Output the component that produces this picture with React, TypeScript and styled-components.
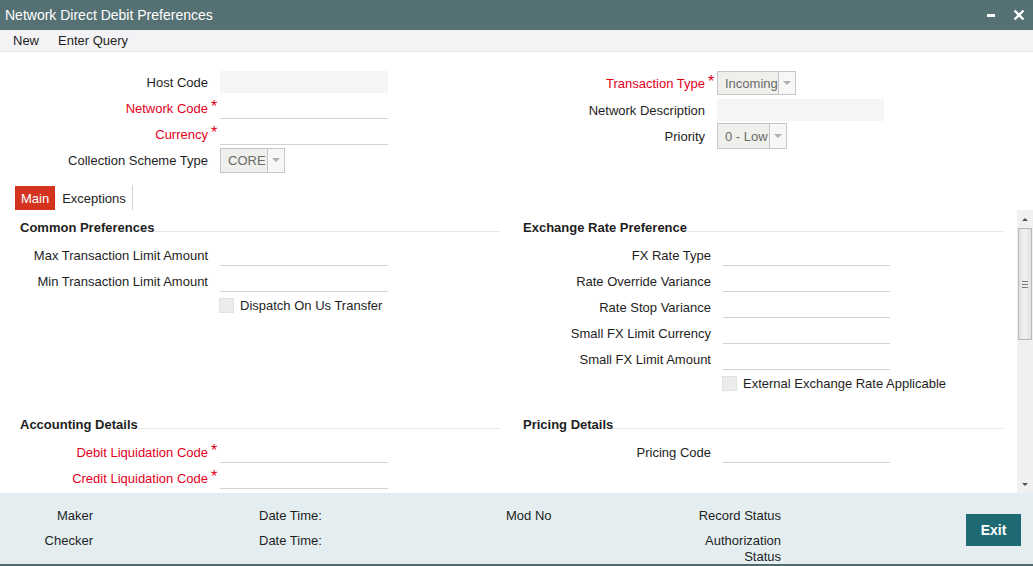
import React from "react";
import styled, { createGlobalStyle } from "styled-components";

const Global = createGlobalStyle`
  html, body { margin: 0; padding: 0; background: #fff; }
  body { font-family: "Liberation Sans", Arial, sans-serif; font-size: 13px; color: #1e1e1e; }
  * { box-sizing: border-box; }
`;

const Window = styled.div`
  width: 1033px;
  height: 566px;
  display: flex;
  flex-direction: column;
  overflow: hidden;
  background: #fff;
`;

const TitleBar = styled.div`
  height: 30px;
  flex: none;
  background: #567173;
  color: #fff;
  font-size: 14px;
  display: flex;
  align-items: center;
  justify-content: space-between;
  padding: 0 8px 0 5px;
`;

const TitleControls = styled.div`
  display: flex;
  align-items: center;
  gap: 18px;
`;

const MinIcon = styled.span`
  display: block;
  width: 8px;
  height: 3px;
  background: #fff;
  margin-top: 1px;
`;

const MenuBar = styled.div`
  height: 22px;
  flex: none;
  background: #f3f3f5;
  border-bottom: 1px solid #e6e6ea;
  display: flex;
  align-items: center;
  gap: 19px;
  padding-left: 13px;
`;

const MenuItem = styled.span`
  color: #1e1e1e;
`;

const Header = styled.div`
  flex: none;
  display: grid;
  grid-template-columns: 520px 1fr;
  padding-top: 17px;
`;

const Block = styled.div`
  display: flex;
  flex-direction: column;
`;

const Row = styled.div<{ $label: number; $h?: number }>`
  display: grid;
  grid-template-columns: ${(p) => p.$label}px 12px auto;
  align-items: center;
  height: ${(p) => p.$h ?? 26}px;
`;

const Label = styled.span<{ $req?: boolean }>`
  text-align: right;
  white-space: nowrap;
  color: ${(p) => (p.$req ? "#e3001b" : "#1e1e1e")};
`;

const Star = styled.span`
  color: #e3001b;
  padding-left: 3px;
  font-size: 16px;
  line-height: 16px;
  align-self: center;
  margin-top: -3px;
`;

const TextInput = styled.div<{ $w: number; $disabled?: boolean }>`
  width: ${(p) => p.$w}px;
  height: 22px;
  background: ${(p) => (p.$disabled ? "#f5f5f5" : "#fff")};
  border-bottom: ${(p) => (p.$disabled ? "none" : "1px solid #d2d2d2")};
`;

const Select = styled.div<{ $w: number; $h: number }>`
  width: ${(p) => p.$w}px;
  height: ${(p) => p.$h}px;
  display: flex;
  border: 1px solid #c6c6c6;
  background: #efefeb;
  color: #6b6b6b;
`;

const SelectText = styled.span`
  flex: 1;
  display: flex;
  align-items: center;
  padding-left: 7px;
  white-space: nowrap;
`;

const SelectArrow = styled.span`
  width: 17px;
  flex: none;
  border-left: 1px solid #c6c6c6;
  background: #f7f7f7;
  display: flex;
  align-items: center;
  justify-content: center;
  &::after {
    content: "";
    border-left: 4px solid transparent;
    border-right: 4px solid transparent;
    border-top: 4px solid #b0b0b0;
  }
`;

const TabBar = styled.div`
  flex: none;
  margin-top: 12px;
  height: 25px;
  display: flex;
  align-items: flex-end;
  padding-left: 15px;
`;

const Tab = styled.div<{ $active?: boolean }>`
  height: ${(p) => (p.$active ? "24px" : "25px")};
  display: flex;
  align-items: center;
  padding: ${(p) => (p.$active ? "0 6px" : "1px 6px 0 7px")};
  background: ${(p) => (p.$active ? "#d4341f" : "transparent")};
  color: ${(p) => (p.$active ? "#fff" : "#1e1e1e")};
  border-right: ${(p) => (p.$active ? "none" : "1px solid #d0d0d0")};
`;

const ScrollArea = styled.div`
  flex: 1;
  min-height: 0;
  display: flex;
`;

const Content = styled.div`
  flex: 1;
  overflow: hidden;
  padding: 10px 0 0 20px;
  display: grid;
  grid-template-columns: 480px 480px;
  grid-auto-rows: min-content;
  column-gap: 23px;
  row-gap: 23px;
`;

const Section = styled.div`
  display: flex;
  flex-direction: column;
`;

const SectionHead = styled.div`
  display: flex;
  height: 15px;
  margin-bottom: 7px;
`;

const SectionTitle = styled.span`
  font-weight: bold;
  line-height: 15px;
  white-space: nowrap;
`;

const Rule = styled.span`
  flex: 1;
  height: 1px;
  margin-top: 11px;
  background: #e6e6e6;
`;

const CheckRow = styled.div`
  height: 22px;
  display: flex;
  align-items: center;
  padding-left: 199px;
  gap: 6px;
`;

const CheckBox = styled.span`
  width: 15px;
  height: 15px;
  background: #ececec;
  border: 1px solid #e2e2e2;
`;

const ScrollBar = styled.div`
  width: 16px;
  flex: none;
  background: #f0f0f0;
  display: flex;
  flex-direction: column;
  align-items: center;
  padding: 0 1px;
`;

const ArrowBtn = styled.span<{ $down?: boolean }>`
  height: 18px;
  width: 100%;
  display: flex;
  align-items: center;
  justify-content: center;
  &::after {
    content: "";
    border-left: 3px solid transparent;
    border-right: 3px solid transparent;
    ${(p) => (p.$down ? "border-top: 3px solid #555;" : "border-bottom: 3px solid #555;")}
  }
`;

const Thumb = styled.span`
  width: 100%;
  height: 112px;
  border: 1px solid #b8b8b8;
  background: linear-gradient(to right, #e0e0e0, #f1f1f1 50%, #e0e0e0);
  display: flex;
  align-items: center;
  justify-content: center;
`;

const Grip = styled.span`
  width: 6px;
  height: 7px;
  border-top: 1px solid #777;
  border-bottom: 1px solid #777;
  position: relative;
  &::after {
    content: "";
    position: absolute;
    left: 0;
    right: 0;
    top: 2px;
    height: 1px;
    background: #777;
  }
`;

const Track = styled.span`
  flex: 1;
`;

const Footer = styled.div`
  height: 73px;
  flex: none;
  background: #e4eef1;
  border-bottom: 2px solid #4f6a6c;
  display: grid;
  grid-template-columns: 93px 166px 247px 180px 95px 1fr;
  grid-template-rows: 16px 32px;
  row-gap: 9px;
  padding-top: 15px;
  line-height: 16px;
`;

const FootText = styled.span<{ $col: number; $row: number; $right?: boolean }>`
  grid-column: ${(p) => p.$col};
  grid-row: ${(p) => p.$row};
  text-align: ${(p) => (p.$right ? "right" : "left")};
`;

const ExitButton = styled.button`
  grid-column: 6;
  grid-row: 1 / span 2;
  justify-self: end;
  align-self: start;
  margin: 6px 12px 0 0;
  width: 55px;
  height: 32px;
  border: none;
  background: #1d6a73;
  color: #fff;
  font-family: inherit;
  font-size: 14px;
  font-weight: bold;
  padding: 0;
`;

type Field = { label: string; req?: boolean };

const FieldRows = ({ fields, labelW, inputW }: { fields: Field[]; labelW: number; inputW: number }) => (
  <>
    {fields.map((f) => (
      <Row key={f.label} $label={labelW}>
        <Label $req={f.req}>{f.label}</Label>
        {f.req ? <Star>*</Star> : <span />}
        <TextInput $w={inputW} />
      </Row>
    ))}
  </>
);

export default function App() {
  return (
    <>
      <Global />
      <Window>
        <TitleBar>
          <span>Network Direct Debit Preferences</span>
          <TitleControls>
            <MinIcon />
            <svg width="12" height="12" viewBox="0 0 12 12">
              <path d="M1.5 1.5 L10.5 10.5 M10.5 1.5 L1.5 10.5" stroke="#fff" strokeWidth="2.4" />
            </svg>
          </TitleControls>
        </TitleBar>
        <MenuBar>
          <MenuItem>New</MenuItem>
          <MenuItem>Enter Query</MenuItem>
        </MenuBar>
        <Header>
          <Block>
            <Row $label={208}>
              <Label>Host Code</Label>
              <span />
              <TextInput $w={168} $disabled />
            </Row>
            <Row $label={208}>
              <Label $req>Network Code</Label>
              <Star>*</Star>
              <TextInput $w={168} />
            </Row>
            <Row $label={208}>
              <Label $req>Currency</Label>
              <Star>*</Star>
              <TextInput $w={168} />
            </Row>
            <Row $label={208}>
              <Label>Collection Scheme Type</Label>
              <span />
              <Select $w={65} $h={25}>
                <SelectText>CORE</SelectText>
                <SelectArrow />
              </Select>
            </Row>
          </Block>
          <Block>
            <Row $label={185} $h={28}>
              <Label $req>Transaction Type</Label>
              <Star>*</Star>
              <Select $w={79} $h={24}>
                <SelectText>Incoming</SelectText>
                <SelectArrow />
              </Select>
            </Row>
            <Row $label={185}>
              <Label>Network Description</Label>
              <span />
              <TextInput $w={167} $disabled />
            </Row>
            <Row $label={185}>
              <Label>Priority</Label>
              <span />
              <Select $w={70} $h={26}>
                <SelectText>0 - Low</SelectText>
                <SelectArrow />
              </Select>
            </Row>
          </Block>
        </Header>
        <TabBar>
          <Tab $active>Main</Tab>
          <Tab>Exceptions</Tab>
        </TabBar>
        <ScrollArea>
          <Content>
            <Section>
              <SectionHead>
                <SectionTitle>Common Preferences</SectionTitle>
                <Rule />
              </SectionHead>
              <FieldRows
                labelW={188}
                inputW={168}
                fields={[{ label: "Max Transaction Limit Amount" }, { label: "Min Transaction Limit Amount" }]}
              />
              <CheckRow>
                <CheckBox />
                <span>Dispatch On Us Transfer</span>
              </CheckRow>
            </Section>
            <Section>
              <SectionHead>
                <SectionTitle>Exchange Rate Preference</SectionTitle>
                <Rule />
              </SectionHead>
              <FieldRows
                labelW={188}
                inputW={167}
                fields={[
                  { label: "FX Rate Type" },
                  { label: "Rate Override Variance" },
                  { label: "Rate Stop Variance" },
                  { label: "Small FX Limit Currency" },
                  { label: "Small FX Limit Amount" },
                ]}
              />
              <CheckRow>
                <CheckBox />
                <span>External Exchange Rate Applicable</span>
              </CheckRow>
            </Section>
            <Section>
              <SectionHead>
                <SectionTitle>Accounting Details</SectionTitle>
                <Rule />
              </SectionHead>
              <FieldRows
                labelW={188}
                inputW={168}
                fields={[
                  { label: "Debit Liquidation Code", req: true },
                  { label: "Credit Liquidation Code", req: true },
                ]}
              />
            </Section>
            <Section>
              <SectionHead>
                <SectionTitle>Pricing Details</SectionTitle>
                <Rule />
              </SectionHead>
              <FieldRows labelW={188} inputW={167} fields={[{ label: "Pricing Code" }]} />
            </Section>
          </Content>
          <ScrollBar>
            <ArrowBtn />
            <Thumb>
              <Grip />
            </Thumb>
            <Track />
            <ArrowBtn $down />
          </ScrollBar>
        </ScrollArea>
        <Footer>
          <FootText $col={1} $row={1} $right>Maker</FootText>
          <FootText $col={3} $row={1}>Date Time:</FootText>
          <FootText $col={4} $row={1}>Mod No</FootText>
          <FootText $col={5} $row={1} $right>Record Status</FootText>
          <FootText $col={1} $row={2} $right>Checker</FootText>
          <FootText $col={3} $row={2}>Date Time:</FootText>
          <FootText $col={5} $row={2} $right>Authorization Status</FootText>
          <ExitButton>Exit</ExitButton>
        </Footer>
      </Window>
    </>
  );
}
